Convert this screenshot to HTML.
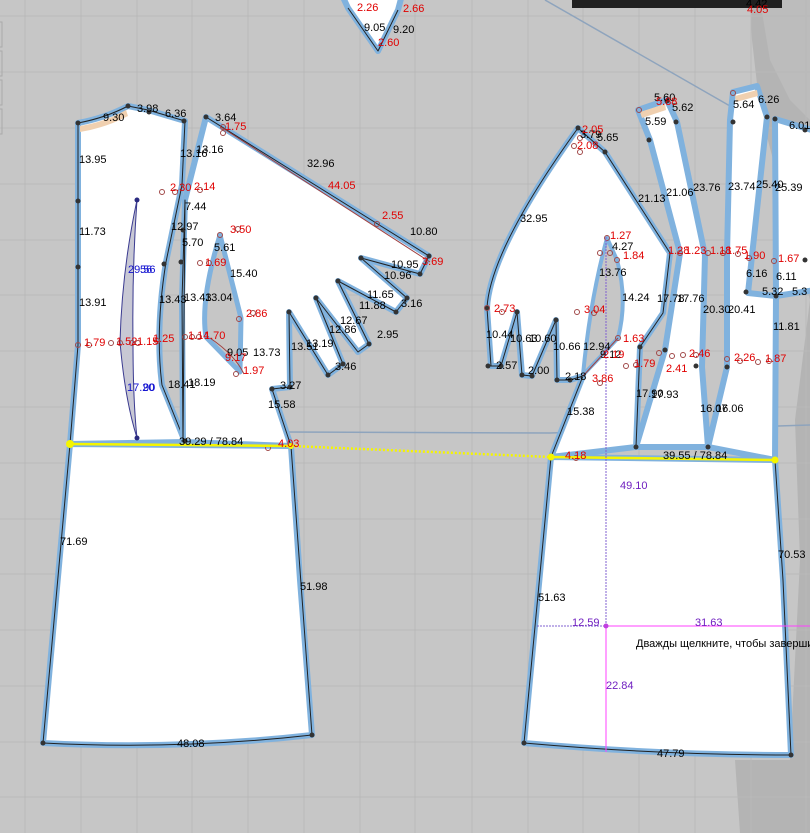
<!DOCTYPE html>
<html><head><meta charset="utf-8"><style>
html,body{margin:0;padding:0;background:#c6c6c6;}
svg{display:block;}
text{font-family:"Liberation Sans","DejaVu Sans",sans-serif;font-size:11px;}
.k{fill:#000}.r{fill:#e00000}.b{fill:#1010d0}.p{fill:#7020c0}
.pc{fill:#fff;stroke:#80b2de;stroke-width:6;stroke-linejoin:round}
.pl{fill:none;stroke:#222;stroke-width:1;stroke-linejoin:round}
.gp{fill:#c6c6c6;stroke:#80b2de;stroke-width:5;stroke-linejoin:round}
</style></head><body>
<svg width="810" height="833" viewBox="0 0 810 833" xmlns="http://www.w3.org/2000/svg">
<rect width="810" height="833" fill="#c6c6c6"/>
<path d="M750,0 L810,0 L810,833 L740,833 L735,760 L790,760 L800,560 L795,420 L810,300 L760,110 L752,40 Z" fill="#b4b4b4"/>
<path d="M760,0 L810,0 L810,120 L790,100 L770,60 Z" fill="#bcbcbc"/>
<g stroke="#b9b9b9" stroke-width="1">
<line x1="25" y1="0" x2="25" y2="833"/><line x1="81" y1="0" x2="81" y2="833"/><line x1="137" y1="0" x2="137" y2="833"/><line x1="192" y1="0" x2="192" y2="833"/><line x1="248" y1="0" x2="248" y2="833"/><line x1="304" y1="0" x2="304" y2="833"/><line x1="360" y1="0" x2="360" y2="833"/><line x1="415" y1="0" x2="415" y2="833"/><line x1="472" y1="0" x2="472" y2="833"/><line x1="528" y1="0" x2="528" y2="833"/><line x1="583" y1="0" x2="583" y2="833"/><line x1="639" y1="0" x2="639" y2="833"/><line x1="695" y1="0" x2="695" y2="833"/><line x1="751" y1="0" x2="751" y2="833"/><line x1="806" y1="0" x2="806" y2="833"/>
<line x1="0" y1="16" x2="810" y2="16"/><line x1="0" y1="72" x2="810" y2="72"/><line x1="0" y1="128" x2="810" y2="128"/><line x1="0" y1="184" x2="810" y2="184"/><line x1="0" y1="240" x2="810" y2="240"/><line x1="0" y1="295" x2="810" y2="295"/><line x1="0" y1="351" x2="810" y2="351"/><line x1="0" y1="407" x2="810" y2="407"/><line x1="0" y1="463" x2="810" y2="463"/><line x1="0" y1="519" x2="810" y2="519"/><line x1="0" y1="574" x2="810" y2="574"/><line x1="0" y1="630" x2="810" y2="630"/><line x1="0" y1="686" x2="810" y2="686"/><line x1="0" y1="742" x2="810" y2="742"/><line x1="0" y1="797" x2="810" y2="797"/>
</g>
<g fill="none" stroke="#aaa"><rect x="-3" y="22" width="5" height="25"/><rect x="-3" y="51" width="5" height="25"/><rect x="-3" y="80" width="5" height="25"/><rect x="-3" y="109" width="5" height="25"/></g>
<rect x="572" y="0" width="210" height="8" fill="#202020"/>
<line x1="545" y1="0" x2="730" y2="106" stroke="#8ea4bd" stroke-width="1.5"/>
<polyline points="285,432 550,433 810,425" fill="none" stroke="#8ea4bd" stroke-width="1.5"/>

<path class="pc" d="M342,-5 L348,8 L378,51 L398,10 L402,-5 Z"/>
<path class="pl" d="M348,8 L378,51 L398,10"/>

<!-- LEFT GROUP -->
<path class="pc" d="M70,444 L291,446 L300,580 L312,735 Q180,750 43,743 Z"/>
<path class="pl" d="M70,444 L43,743 Q180,750 312,735 L291,446"/>
<path class="pc" d="M78,123 Q105,118 128,106 L148,110 L185,121 L182,185 L166,262 Q155,330 162,385 L185,442 L70,444 L78,345 Z"/>
<path class="pl" d="M70,444 L78,345 L78,123 Q105,118 128,106 L148,110 L185,121 L182,185 L166,262 Q155,330 162,385 L185,442"/>
<path d="M80,126 Q105,122 126,110 L128,116 Q105,128 80,132 Z" fill="#f0d0b0"/>
<path class="pc" d="M206,117 L429,256 L420,274 L361,258 L407,298 L396,312 L338,281 L369,344 L358,352 L316,298 L343,364 L328,375 L289,312 L290,387 L272,389 L291,446 L183,442 L182,300 L185,200 Z"/>
<path class="pl" d="M206,117 L429,256 L420,274 L361,258 L407,298 L396,312 L338,281 L369,344 L358,352 L316,298 L343,364 L328,375 L289,312 L290,387 L272,389 L291,446 M183,442 L182,300 L185,200 Z"/>
<path class="gp" d="M220,235 Q200,300 206,337 L240,372 L241,318 Z"/>
<path d="M137,200 Q122,270 120,342 Q125,400 137,438 Q133,400 133,342 Q132,270 137,200 Z" fill="#c8c8d4" stroke="#3a3a90" stroke-width="1"/>
<circle cx="137" cy="200" r="2.5" fill="#2a2a80"/><circle cx="137" cy="438" r="2.5" fill="#2a2a80"/>
<line x1="221" y1="127" x2="430" y2="262" stroke="#a04040" stroke-width="1"/>
<path d="M210,338 Q235,355 244,374" fill="none" stroke="#a04040"/>
<g fill="#333"><circle cx="78" cy="123" r="2.5"/><circle cx="128" cy="106" r="2.5"/><circle cx="149" cy="112" r="2.5"/><circle cx="184" cy="121" r="2.5"/><circle cx="78" cy="201" r="2.5"/><circle cx="78" cy="267" r="2.5"/><circle cx="206" cy="117" r="2.5"/><circle cx="183" cy="230" r="2.5"/><circle cx="181" cy="262" r="2.5"/><circle cx="164" cy="264" r="2.5"/><circle cx="429" cy="256" r="2.5"/><circle cx="420" cy="274" r="2.5"/><circle cx="361" cy="258" r="2.5"/><circle cx="407" cy="298" r="2.5"/><circle cx="396" cy="312" r="2.5"/><circle cx="338" cy="281" r="2.5"/><circle cx="369" cy="344" r="2.5"/><circle cx="316" cy="298" r="2.5"/><circle cx="343" cy="364" r="2.5"/><circle cx="328" cy="375" r="2.5"/><circle cx="289" cy="312" r="2.5"/><circle cx="290" cy="387" r="2.5"/><circle cx="272" cy="389" r="2.5"/><circle cx="185" cy="441" r="2.5"/><circle cx="43" cy="743" r="2.5"/><circle cx="312" cy="735" r="2.5"/></g>
<g fill="none" stroke="#a04848" stroke-width="1"><circle cx="78" cy="345" r="2.5"/><circle cx="89" cy="345" r="2.5"/><circle cx="111" cy="343" r="2.5"/><circle cx="120" cy="343" r="2.5"/><circle cx="132" cy="343" r="2.5"/><circle cx="138" cy="343" r="2.5"/><circle cx="157" cy="341" r="2.5"/><circle cx="185" cy="337" r="2.5"/><circle cx="192" cy="337" r="2.5"/><circle cx="199" cy="337" r="2.5"/><circle cx="162" cy="192" r="2.5"/><circle cx="175" cy="192" r="2.5"/><circle cx="200" cy="190" r="2.5"/><circle cx="220" cy="235" r="2.5"/><circle cx="238" cy="229" r="2.5"/><circle cx="200" cy="263" r="2.5"/><circle cx="209" cy="263" r="2.5"/><circle cx="239" cy="319" r="2.5"/><circle cx="253" cy="313" r="2.5"/><circle cx="236" cy="374" r="2.5"/><circle cx="223" cy="127" r="2.5"/><circle cx="223" cy="133" r="2.5"/><circle cx="377" cy="224" r="2.5"/><circle cx="268" cy="448" r="2.5"/></g>
<line x1="70" y1="444" x2="291" y2="446" stroke="#f5f500" stroke-width="2.5"/>
<line x1="291" y1="446" x2="551" y2="457" stroke="#f5f500" stroke-width="2.5" stroke-dasharray="2,2"/>
<circle cx="70" cy="444" r="4" fill="#f5f500"/><circle cx="291" cy="446" r="3" fill="#f5f500"/>

<!-- RIGHT GROUP -->
<path class="pc" d="M551,457 L775,460 L783,580 L791,755 Q660,755 524,743 Z"/>
<path class="pl" d="M551,457 L524,743 Q660,755 791,755 L783,580 L775,460"/>
<path class="pc" d="M733,92 L757,86 L767,117 L748,293 L776,296 L775,460 L708,447 L727,367 L727,255 L730,120 Z"/>
<path class="pc" d="M775,119 L805,128 L815,131 L815,290 L776,296 Z"/>
<path class="pc" d="M638,110 L667,100 L677,122 L705,255 L702,367 L708,447 L636,447 L665,350 L680,253 L650,140 Z"/>
<path class="pc" d="M578,128 L605,152 L670,253 L663,313 L640,347 L636,447 L551,457 L583,376 L570,380 L557,380 L556,320 L532,376 L522,375 L517,312 L501,366 L491,366 L487,308 Q490,250 578,128 Z"/>
<path class="pl" d="M578,128 L605,152 L670,253 L663,313 L640,347 L636,447 M551,457 L583,376 L570,380 L557,380 L556,320 L532,376 L522,375 L517,312 L501,366 L491,366 L487,308 Q490,250 578,128"/>
<path class="gp" d="M607,238 Q590,300 583,375 L618,338 Q628,300 617,260 Z" style="stroke-width:4"/>
<path d="M640,112 L665,104 L666,110 L642,118 Z" fill="#f0d0b0"/>
<path d="M735,96 L757,90 L758,96 L736,102 Z" fill="#f0d0b0"/>
<line x1="583" y1="376" x2="618" y2="338" stroke="#a04040"/>
<g fill="#333"><circle cx="578" cy="128" r="2.5"/><circle cx="605" cy="152" r="2.5"/><circle cx="487" cy="308" r="2.5"/><circle cx="488" cy="366" r="2.5"/><circle cx="501" cy="366" r="2.5"/><circle cx="517" cy="312" r="2.5"/><circle cx="522" cy="375" r="2.5"/><circle cx="532" cy="376" r="2.5"/><circle cx="556" cy="320" r="2.5"/><circle cx="557" cy="380" r="2.5"/><circle cx="570" cy="380" r="2.5"/><circle cx="640" cy="347" r="2.5"/><circle cx="636" cy="447" r="2.5"/><circle cx="665" cy="350" r="2.5"/><circle cx="649" cy="140" r="2.5"/><circle cx="676" cy="122" r="2.5"/><circle cx="667" cy="101" r="2.5"/><circle cx="696" cy="366" r="2.5"/><circle cx="727" cy="367" r="2.5"/><circle cx="708" cy="447" r="2.5"/><circle cx="733" cy="122" r="2.5"/><circle cx="767" cy="117" r="2.5"/><circle cx="775" cy="119" r="2.5"/><circle cx="746" cy="292" r="2.5"/><circle cx="776" cy="296" r="2.5"/><circle cx="805" cy="130" r="2.5"/><circle cx="805" cy="260" r="2.5"/><circle cx="524" cy="743" r="2.5"/><circle cx="791" cy="755" r="2.5"/></g>
<g fill="none" stroke="#a04848" stroke-width="1"><circle cx="574" cy="146" r="2.5"/><circle cx="580" cy="138" r="2.5"/><circle cx="580" cy="152" r="2.5"/><circle cx="487" cy="308" r="2.5"/><circle cx="502" cy="312" r="2.5"/><circle cx="577" cy="312" r="2.5"/><circle cx="594" cy="313" r="2.5"/><circle cx="607" cy="238" r="2.5"/><circle cx="617" cy="260" r="2.5"/><circle cx="618" cy="338" r="2.5"/><circle cx="626" cy="366" r="2.5"/><circle cx="636" cy="365" r="2.5"/><circle cx="659" cy="353" r="2.5"/><circle cx="672" cy="356" r="2.5"/><circle cx="683" cy="355" r="2.5"/><circle cx="696" cy="355" r="2.5"/><circle cx="600" cy="253" r="2.5"/><circle cx="610" cy="253" r="2.5"/><circle cx="680" cy="253" r="2.5"/><circle cx="708" cy="253" r="2.5"/><circle cx="723" cy="253" r="2.5"/><circle cx="738" cy="254" r="2.5"/><circle cx="749" cy="258" r="2.5"/><circle cx="774" cy="261" r="2.5"/><circle cx="727" cy="359" r="2.5"/><circle cx="740" cy="361" r="2.5"/><circle cx="758" cy="362" r="2.5"/><circle cx="769" cy="361" r="2.5"/><circle cx="600" cy="383" r="2.5"/><circle cx="576" cy="458" r="2.5"/><circle cx="639" cy="110" r="2.5"/><circle cx="733" cy="93" r="2.5"/></g>
<line x1="551" y1="457" x2="775" y2="460" stroke="#f5f500" stroke-width="2.5"/>
<circle cx="551" cy="457" r="3.5" fill="#f5f500"/><circle cx="775" cy="460" r="3.5" fill="#f5f500"/>
<line x1="606" y1="237" x2="606" y2="625" stroke="#8060d0" stroke-dasharray="2,1"/>
<line x1="537" y1="626" x2="606" y2="626" stroke="#8060d0" stroke-dasharray="2,1"/>
<line x1="606" y1="626" x2="606" y2="752" stroke="#ff40ff"/>
<line x1="606" y1="626" x2="810" y2="626" stroke="#ff40ff"/>
<circle cx="606" cy="626" r="2.5" fill="#c040e0"/>

<g class="k">
<text x="103" y="121">9.30</text><text x="137" y="112">3.98</text><text x="165" y="117">6.36</text><text x="215" y="121">3.64</text>
<text x="79" y="163">13.95</text><text x="79" y="235">11.73</text><text x="79" y="306">13.91</text>
<text x="180" y="157">13.16</text><text x="196" y="153">13.16</text><text x="307" y="167">32.96</text>
<text x="185" y="210">7.44</text><text x="171" y="230">12.97</text><text x="182" y="246">5.70</text><text x="214" y="251">5.61</text>
<text x="230" y="277">15.40</text><text x="159" y="303">13.43</text><text x="184" y="301">13.43</text><text x="205" y="301">13.04</text>
<text x="410" y="235">10.80</text><text x="391" y="268">10.95</text><text x="384" y="279">10.96</text>
<text x="367" y="298">11.65</text><text x="359" y="309">11.88</text><text x="401" y="307">3.16</text>
<text x="340" y="324">12.67</text><text x="329" y="333">12.86</text><text x="377" y="338">2.95</text>
<text x="291" y="350">13.51</text><text x="306" y="347">13.19</text><text x="335" y="370">3.46</text>
<text x="227" y="356">9.05</text><text x="253" y="356">13.73</text><text x="168" y="388">18.41</text><text x="188" y="386">18.19</text>
<text x="280" y="389">3.27</text><text x="268" y="408">15.58</text><text x="179" y="445">39.29 / 78.84</text>
<text x="60" y="545">71.69</text><text x="300" y="590">51.98</text><text x="177" y="747">48.08</text>
<text x="364" y="31">9.05</text><text x="393" y="33">9.20</text>
</g>
<g class="r">
<text x="225" y="130">1.75</text><text x="328" y="189">44.05</text><text x="382" y="219">2.55</text><text x="422" y="265">3.69</text>
<text x="170" y="191">2.30</text><text x="194" y="190">2.14</text><text x="230" y="233">3.50</text><text x="205" y="266">1.69</text>
<text x="246" y="317">2.86</text><text x="188" y="339">1.14</text><text x="204" y="339">1.70</text><text x="225" y="361">9.17</text><text x="243" y="374">1.97</text>
<text x="84" y="346">1.79</text><text x="116" y="345">1.52</text><text x="137" y="345">1.15</text><text x="153" y="342">1.25</text>
<text x="278" y="447">4.03</text><text x="357" y="11">2.26</text><text x="403" y="12">2.66</text><text x="378" y="46">2.60</text>
</g>
<g class="b"><text x="128" y="273">29.56</text><text x="140" y="273">56</text><text x="127" y="391">17.20</text><text x="143" y="391">90</text></g>

<g class="k">
<text x="654" y="101">5.60</text><text x="672" y="111">5.62</text><text x="645" y="125">5.59</text><text x="746" y="7">4.42</text>
<text x="733" y="108">5.64</text><text x="758" y="103">6.26</text><text x="789" y="129">6.01</text>
<text x="580" y="138">3.79</text><text x="597" y="141">5.65</text><text x="520" y="222">32.95</text>
<text x="638" y="202">21.13</text><text x="666" y="196">21.06</text><text x="693" y="191">23.76</text><text x="728" y="190">23.74</text>
<text x="756" y="188">25.40</text><text x="775" y="191">25.39</text>
<text x="612" y="250">4.27</text><text x="599" y="276">13.76</text><text x="622" y="301">14.24</text><text x="657" y="302">17.78</text><text x="677" y="302">17.76</text>
<text x="703" y="313">20.30</text><text x="728" y="313">20.41</text><text x="746" y="277">6.16</text><text x="776" y="280">6.11</text>
<text x="762" y="295">5.32</text><text x="792" y="295">5.3</text><text x="773" y="330">11.81</text>
<text x="486" y="338">10.44</text><text x="510" y="342">10.63</text><text x="529" y="342">10.60</text><text x="553" y="350">10.66</text><text x="583" y="350">12.94</text>
<text x="496" y="369">2.57</text><text x="528" y="374">2.00</text><text x="565" y="380">2.18</text><text x="600" y="358">9.12</text>
<text x="567" y="415">15.38</text><text x="636" y="397">17.90</text><text x="651" y="398">17.93</text><text x="700" y="412">16.07</text><text x="716" y="412">16.06</text>
<text x="663" y="459">39.55 / 78.84</text><text x="620" y="489" class="p">49.10</text>
<text x="538" y="601">51.63</text><text x="778" y="558">70.53</text><text x="657" y="757">47.79</text>
<text x="572" y="626" class="p">12.59</text><text x="695" y="626" class="p">31.63</text><text x="606" y="689" class="p">22.84</text>
<text x="636" y="647">Дважды щелкните, чтобы завершить</text>
</g>
<g class="r">
<text x="582" y="133">2.05</text><text x="577" y="149">2.08</text><text x="656" y="105">5.88</text><text x="747" y="13">4.05</text>
<text x="610" y="239">1.27</text><text x="623" y="259">1.84</text><text x="494" y="312">2.73</text><text x="584" y="313">3.04</text>
<text x="623" y="342">1.63</text><text x="603" y="358">2.19</text><text x="634" y="367">1.79</text><text x="592" y="382">3.86</text>
<text x="668" y="254">1.28</text><text x="685" y="254">1.23</text><text x="710" y="254">1.18</text><text x="726" y="254">1.75</text><text x="744" y="259">1.90</text><text x="778" y="262">1.67</text>
<text x="689" y="357">2.46</text><text x="666" y="372">2.41</text><text x="734" y="361">2.26</text><text x="765" y="362">1.87</text><text x="565" y="459">4.18</text>
</g>
</svg>
</body></html>
